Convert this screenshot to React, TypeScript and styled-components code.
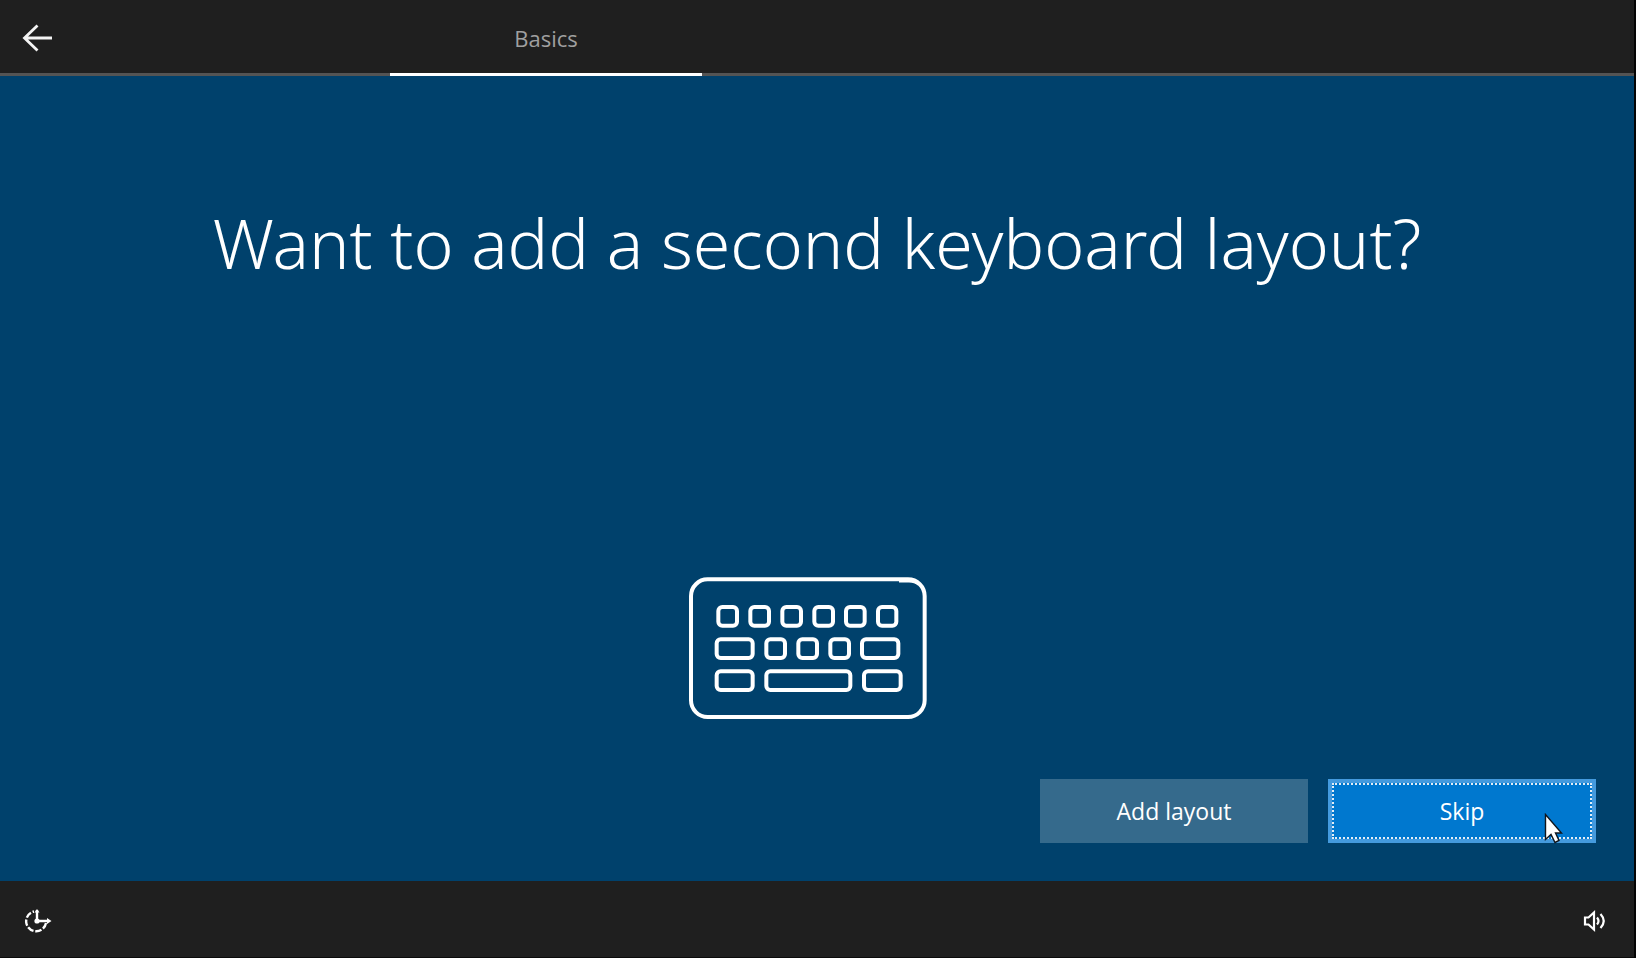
import React from 'react';
import styled, { createGlobalStyle, css } from 'styled-components';

const GlobalStyle = createGlobalStyle`
  *, *::before, *::after {
    box-sizing: border-box;
  }

  body {
    margin: 0;
    background: #000;
    color: #fff;
    font-family: 'Segoe UI', 'Open Sans', 'Noto Sans', sans-serif;
  }
`;

const Screen = styled.div`
  display: flex;
  flex-direction: column;
  min-height: 100vh;
  border-right: 2px solid #040404;
  background: #00416c;
`;

const Header = styled.header`
  display: flex;
  height: 76px;
  background: #1f1f1f;
  box-shadow: inset 0 -3px #545454;
`;

const HeaderSide = styled.div`
  flex: 0 0 390px;
  display: flex;
`;

const IconButton = styled.button`
  display: flex;
  align-items: center;
  justify-content: center;
  width: 75px;
  padding: 0;
  border: 0;
  background: transparent;
  color: #fff;
`;

const Tabs = styled.nav`
  display: flex;
`;

const Tab = styled.a`
  width: 312px;
  padding-top: 22px;
  border-bottom: 3px solid #fff;
  color: #a0a0a0;
  font-size: 22px;
  line-height: 32px;
  text-align: center;
  text-decoration: none;
`;

const Main = styled.main`
  flex: 1;
  display: flex;
  flex-direction: column;
  padding: 117px 38px 38px;
`;

const Title = styled.h1`
  margin: 0;
  font-family: 'Segoe UI', 'Noto Sans', sans-serif;
  font-size: 68px;
  font-weight: 300;
  line-height: 100px;
  text-align: center;
`;

const Figure = styled.div`
  display: flex;
  justify-content: center;
  margin-top: auto;
  padding-right: 18px;
`;

const Actions = styled.div`
  display: flex;
  justify-content: flex-end;
  gap: 20px;
  margin-top: 60px;
`;

const ActionButton = styled.button<{ $primary?: boolean }>`
  position: relative;
  width: 268px;
  height: 64px;
  padding: 0;
  border: 0;
  background: #356a8c;
  color: #fff;
  font: inherit;
  font-size: 23px;
  line-height: 32px;

  ${({ $primary }) =>
    $primary &&
    css`
      border: 4px solid #449ade;
      background: #0078cf;
      outline: 2px dotted #e4edf5;
      outline-offset: -6px;
    `}
`;

const Pointer = styled.svg`
  position: absolute;
  right: 29px;
  bottom: -5px;
`;

const Footer = styled.footer`
  display: flex;
  justify-content: space-between;
  height: 77px;
  padding: 4px 2px 0 0;
  background: #1f1f1f;
  border-bottom: 1px solid #0b0b0b;
`;

type Key = [x: number, y: number, width: number];

const keys: Key[] = [
  [116, 111, 56], [212, 111, 56], [308, 111, 56], [404, 111, 56], [499, 111, 56], [595, 111, 55],
  [111, 208, 108], [260, 208, 56], [356, 208, 56], [452, 208, 56], [547, 208, 109],
  [111, 304, 108], [260, 304, 252], [553, 304, 110],
];

const BackIcon = () => (
  <svg width="32" height="30" viewBox="0 0 32 30" fill="none" stroke="#f4f4f4" strokeWidth="2.800" aria-hidden="true">
    <path d="M30 15H3M15.500 2.500L2.500 15l13 12.500" />
  </svg>
);

const KeyboardIcon = () => (
  <svg width="238" height="142" viewBox="28 21 714 426" fill="none" stroke="#fff" role="img" aria-label="Keyboard">
    <rect x="34" y="28" width="701" height="413" rx="50" strokeWidth="12" />
    <path d="M658 33h30q18 0 30 10" strokeWidth="9" />
    {keys.map(([x, y, width]) => (
      <rect key={`${x}-${y}`} x={x} y={y} width={width} height="56" rx="12" strokeWidth="12" />
    ))}
  </svg>
);

const EaseOfAccessIcon = () => (
  <svg width="28" height="26" viewBox="0 0 28 26" fill="none" stroke="#fff" strokeWidth="2.400" aria-hidden="true">
    <path d="M13 2v11h11" />
    <path d="M22 15A10 10 0 1 1 10 3.500" strokeDasharray="6.500 1.800" />
    <path d="M10.500 4.500L13 1l2.500 3.500zM23 10l4.500 3-4.500 3z" fill="#fff" stroke="none" />
    <circle cx="13" cy="13" r="2.600" fill="#fff" stroke="none" />
  </svg>
);

const VolumeIcon = () => (
  <svg width="24" height="22" viewBox="0 0 24 22" fill="none" stroke="#fff" strokeWidth="2.200" aria-hidden="true">
    <path d="M2 7.500H5.500L11 2.500v17l-5.500-5H2z" />
    <path d="M14 7.500q3 3.500 0 7M17.500 4q6.500 7 0 14" />
  </svg>
);

const App = () => (
  <>
    <GlobalStyle />
    <Screen>
      <Header>
        <HeaderSide>
          <IconButton type="button" aria-label="Back">
            <BackIcon />
          </IconButton>
        </HeaderSide>
        <Tabs>
          <Tab href="#basics" aria-current="step">Basics</Tab>
        </Tabs>
      </Header>
      <Main>
        <Title>Want to add a second keyboard layout?</Title>
        <Figure>
          <KeyboardIcon />
        </Figure>
        <Actions>
          <ActionButton type="button">Add layout</ActionButton>
          <ActionButton type="button" $primary>
            Skip
            <Pointer width="19" height="31" viewBox="0 0 19 31" aria-hidden="true">
              <path
                d="M1.500 1.500v25l5.500-5 4 8 4-2-3.500-7.500h6z"
                fill="#fff"
                stroke="#10151c"
                strokeWidth="1.400"
              />
            </Pointer>
          </ActionButton>
        </Actions>
      </Main>
      <Footer>
        <IconButton type="button" aria-label="Ease of access">
          <EaseOfAccessIcon />
        </IconButton>
        <IconButton type="button" aria-label="Volume">
          <VolumeIcon />
        </IconButton>
      </Footer>
    </Screen>
  </>
);

export default App;
